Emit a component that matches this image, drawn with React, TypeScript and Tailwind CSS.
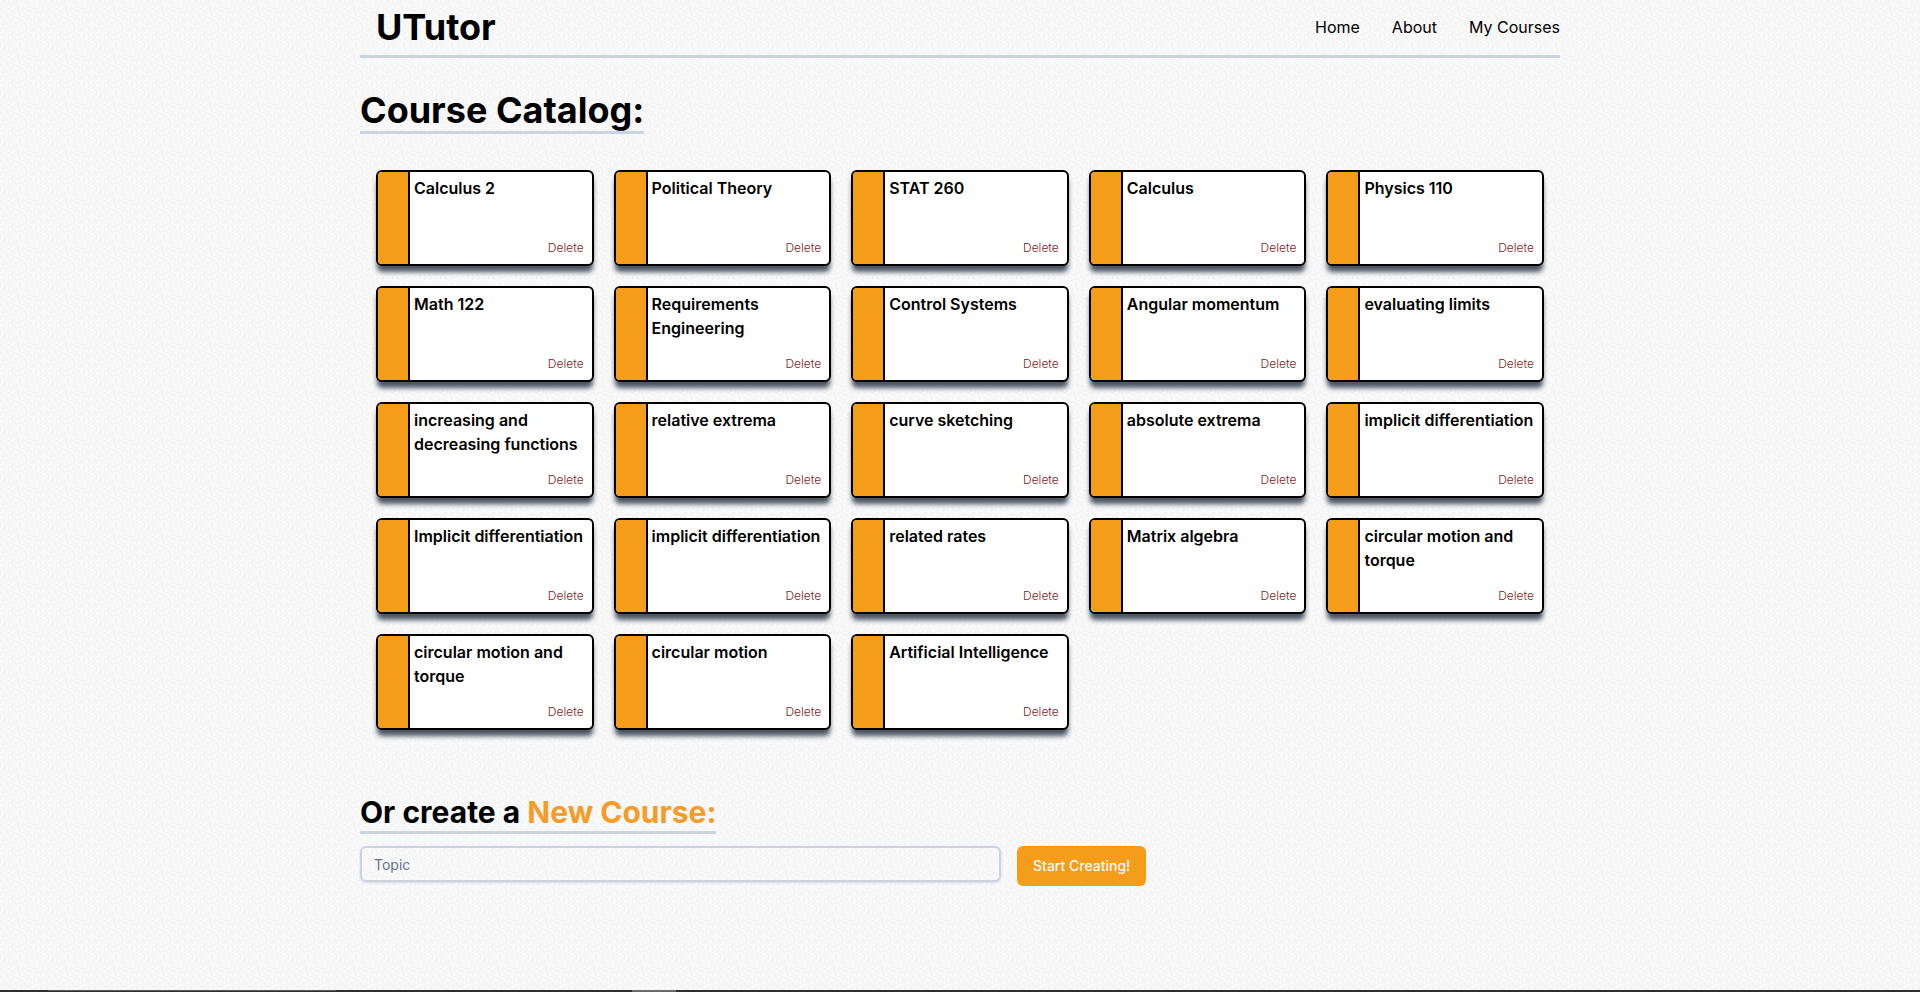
const courses = [
  "Calculus 2", "Political Theory", "STAT 260", "Calculus", "Physics 110",
  "Math 122", "Requirements Engineering", "Control Systems", "Angular momentum", "evaluating limits",
  "increasing and decreasing functions", "relative extrema", "curve sketching", "absolute extrema", "implicit differentiation",
  "Implicit differentiation", "implicit differentiation", "related rates", "Matrix algebra", "circular motion and torque",
  "circular motion and torque", "circular motion", "Artificial Intelligence",
];

function PaperTexture() {
  return (
    <svg className="pointer-events-none absolute inset-0 -z-10 h-full w-full" aria-hidden="true">
      <filter id="grain" x="0" y="0" width="100%" height="100%" colorInterpolationFilters="sRGB">
        <feTurbulence type="fractalNoise" baseFrequency="0.5" numOctaves="2" seed="4" stitchTiles="stitch" />
        <feColorMatrix values="0.09 0 0 0 0.925  0.09 0 0 0 0.925  0.09 0 0 0 0.925  0 0 0 0 1" />
      </filter>
      <pattern id="paper" width="48" height="48" patternUnits="userSpaceOnUse">
        <rect width="48" height="48" filter="url(#grain)" />
      </pattern>
      <rect width="100%" height="100%" fill="url(#paper)" />
    </svg>
  );
}

function CourseCard({ title }: { title: string }) {
  return (
    <article className="flex h-24 overflow-hidden rounded-md border-2 border-black bg-white shadow-[0_7px_5px_-1px_#4b5563]">
      <div className="w-8 shrink-0 border-r-2 border-black bg-[#f59c18]" />
      <div className="flex min-w-0 flex-1 flex-col justify-between pl-1">
        <h2 className="pt-1 text-base font-semibold leading-6">{title}</h2>
        <button className="mr-2 self-end pb-2 text-xs leading-4 font-light text-[#7f1d1d]">Delete</button>
      </div>
    </article>
  );
}

export default function App() {
  return (
    <div className="relative isolate flex h-[992px] flex-col overflow-hidden bg-[#f8f8f8] font-['Inter',sans-serif] text-black">
      <PaperTexture />
      <div className="mx-auto w-[1200px] flex-1">
        <header className="flex h-[58px] items-center justify-between border-b-[3px] border-[#cbd3e1] pb-0.5 pl-4">
          <span className="text-4xl font-bold">UTutor</span>
          <nav className="flex gap-8 text-base">
            <a>Home</a>
            <a>About</a>
            <a>My Courses</a>
          </nav>
        </header>
        <main>
          <h1 className="mt-8 w-fit border-b-[3px] border-[#cbd3e1] pb-px text-4xl font-bold">Course Catalog:</h1>
          <section className="mt-9 grid grid-cols-5 gap-5 px-4">
            {courses.map((title, i) => <CourseCard key={i} title={title} />)}
          </section>
          <h2 className="mt-16 w-fit border-b-[3px] border-[#cbd3e1] pb-px text-3xl font-bold">
            Or create a <span className="text-[#f59c28]">New Course:</span>
          </h2>
          <form className="mt-3 flex items-start gap-4">
            <input
              placeholder="Topic"
              className="h-9 w-[641px] rounded-md border-2 border-[#cbd3e1] bg-transparent px-3 text-sm shadow-sm placeholder:text-slate-500"
            />
            <button type="button" className="h-10 rounded-md bg-[#f59c18] px-4 text-sm font-medium text-slate-50">Start Creating!</button>
          </form>
        </main>
      </div>
      <footer className="flex h-0.5 bg-[#303030]">
        <div className="ml-12 h-px w-[288px] bg-[#5a5a5a]" />
        <div className="ml-[296px] w-11 bg-[#6a6a6a]" />
      </footer>
    </div>
  );
}
